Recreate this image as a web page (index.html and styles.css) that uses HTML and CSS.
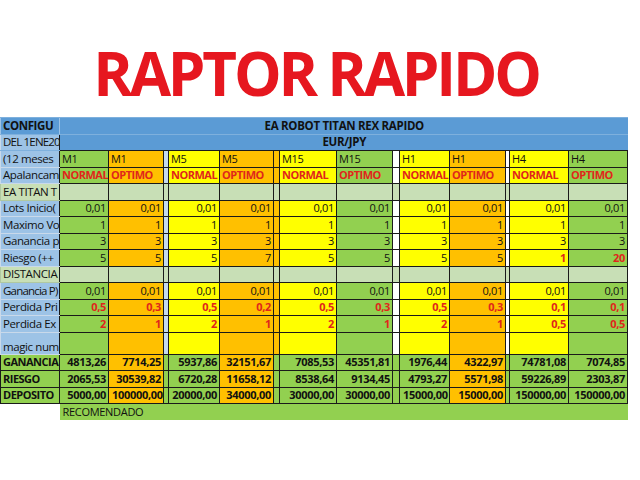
FILE: index.html
```html
<!DOCTYPE html>
<html>
<head>
<meta charset="utf-8">
<link rel="stylesheet" href="styles.css">
</head>
<body>
<div class="title">RAPTOR RAPIDO</div>
<table class="sheet">
<colgroup>
<col class="w-lab"><col class="w49"><col class="w55"><col class="w5"><col class="w51"><col class="w54"><col class="w6"><col class="w57"><col class="w56"><col class="w7"><col class="w50"><col class="w56"><col class="w4"><col class="w59"><col class="w59">
</colgroup>
<tr class="h1"><td class="lab blue b">CONFIGU</td><td class="blue ctr b" colspan="14">EA ROBOT TITAN REX RAPIDO</td></tr>
<tr class="h2"><td class="lab lb tight">DEL 1ENE20</td><td class="blue ctr b" colspan="14">EUR/JPY</td></tr>
<tr class="tf"><td class="lab lb">(12 meses</td><td class="g l">M1</td><td class="o l">M1</td><td class="s1"></td><td class="y l">M5</td><td class="o l">M5</td><td class="s2"></td><td class="y l">M15</td><td class="g l">M15</td><td class="s3"></td><td class="y l">H1</td><td class="o l">H1</td><td class="s4"></td><td class="y l">H4</td><td class="g l">H4</td></tr>
<tr><td class="lab lb">Apalancam</td><td class="g l rt">NORMAL</td><td class="o l rt">OPTIMO</td><td class="s1"></td><td class="y l rt">NORMAL</td><td class="o l rt">OPTIMO</td><td class="s2"></td><td class="y l rt">NORMAL</td><td class="g l rt">OPTIMO</td><td class="s3"></td><td class="y l rt">NORMAL</td><td class="o l rt">OPTIMO</td><td class="s4"></td><td class="y l rt">NORMAL</td><td class="g l rt">OPTIMO</td></tr>
<tr class="pale"><td class="lab">EA TITAN T</td><td></td><td></td><td></td><td></td><td></td><td></td><td></td><td></td><td></td><td></td><td></td><td></td><td></td><td></td></tr>
<tr><td class="lab lb">Lots Inicio(</td><td class="g">0,01</td><td class="o">0,01</td><td class="s1"></td><td class="y">0,01</td><td class="o">0,01</td><td class="s2"></td><td class="y">0,01</td><td class="g">0,01</td><td class="s3"></td><td class="y">0,01</td><td class="o">0,01</td><td class="s4"></td><td class="y">0,01</td><td class="g">0,01</td></tr>
<tr><td class="lab lb">Maximo Vo</td><td class="g">1</td><td class="o">1</td><td class="s1"></td><td class="y">1</td><td class="o">1</td><td class="s2"></td><td class="y">1</td><td class="g">1</td><td class="s3"></td><td class="y">1</td><td class="o">1</td><td class="s4"></td><td class="y">1</td><td class="g">1</td></tr>
<tr><td class="lab lb">Ganancia p</td><td class="g">3</td><td class="o">3</td><td class="s1"></td><td class="y">3</td><td class="o">3</td><td class="s2"></td><td class="y">3</td><td class="g">3</td><td class="s3"></td><td class="y">3</td><td class="o">3</td><td class="s4"></td><td class="y">3</td><td class="g">3</td></tr>
<tr><td class="lab lb">Riesgo (++</td><td class="g">5</td><td class="o">5</td><td class="s1"></td><td class="y">5</td><td class="o">7</td><td class="s2"></td><td class="y">5</td><td class="g">5</td><td class="s3"></td><td class="y">5</td><td class="o">5</td><td class="s4"></td><td class="y rt">1</td><td class="g rt">20</td></tr>
<tr class="pale"><td class="lab">DISTANCIA</td><td></td><td></td><td></td><td></td><td></td><td></td><td></td><td></td><td></td><td></td><td></td><td></td><td></td><td></td></tr>
<tr><td class="lab lb tight">Ganancia P)</td><td class="g">0,01</td><td class="o">0,01</td><td class="s1"></td><td class="y">0,01</td><td class="o">0,01</td><td class="s2"></td><td class="y">0,01</td><td class="g">0,01</td><td class="s3"></td><td class="y">0,01</td><td class="o">0,01</td><td class="s4"></td><td class="y">0,01</td><td class="g">0,01</td></tr>
<tr><td class="lab lb">Perdida Pri</td><td class="g rt">0,5</td><td class="o rt">0,3</td><td class="s1"></td><td class="y rt">0,5</td><td class="o rt">0,2</td><td class="s2"></td><td class="y rt">0,5</td><td class="g rt">0,3</td><td class="s3"></td><td class="y rt">0,5</td><td class="o rt">0,3</td><td class="s4"></td><td class="y rt">0,1</td><td class="g rt">0,1</td></tr>
<tr><td class="lab lb">Perdida Ex</td><td class="g rt">2</td><td class="o rt">1</td><td class="s1"></td><td class="y rt">2</td><td class="o rt">1</td><td class="s2"></td><td class="y rt">2</td><td class="g rt">1</td><td class="s3"></td><td class="y rt">2</td><td class="o rt">1</td><td class="s4"></td><td class="y rt">0,5</td><td class="g rt">0,5</td></tr>
<tr class="magic"><td class="lab lb mg">magic num</td><td class="g"></td><td class="o"></td><td class="s1"></td><td class="y"></td><td class="o"></td><td class="s2"></td><td class="y"></td><td class="g"></td><td class="s3"></td><td class="y"></td><td class="o"></td><td class="s4"></td><td class="y"></td><td class="g"></td></tr>
<tr class="tot"><td class="lab">GANANCIA</td><td>4813,26</td><td class="o">7714,25</td><td></td><td>5937,86</td><td class="o">32151,67</td><td></td><td>7085,53</td><td>45351,81</td><td></td><td>1976,44</td><td class="o">4322,97</td><td></td><td>74781,08</td><td>7074,85</td></tr>
<tr class="tot"><td class="lab">RIESGO</td><td>2065,53</td><td class="o">30539,82</td><td></td><td>6720,28</td><td class="o">11658,12</td><td></td><td>8538,64</td><td>9134,45</td><td></td><td>4793,27</td><td class="o">5571,98</td><td></td><td>59226,89</td><td>2303,87</td></tr>
<tr class="tot"><td class="lab">DEPOSITO</td><td>5000,00</td><td class="o">100000,00</td><td></td><td>20000,00</td><td class="o">34000,00</td><td></td><td>30000,00</td><td>30000,00</td><td></td><td>15000,00</td><td class="o">15000,00</td><td></td><td>150000,00</td><td>150000,00</td></tr>
<tr class="rec"><td class="lab"></td><td class="l" colspan="14">RECOMENDADO</td></tr>
</table>
</body>
</html>
```
FILE: styles.css
```css
html, body {
  margin: 0;
  padding: 0;
  background: #ffffff;
}
body {
  width: 640px;
  height: 480px;
  overflow: hidden;
  font-family: "Open Sans", "DejaVu Sans", sans-serif;
}
.title {
  padding-top: 43px;
  height: 60px;
  line-height: 60px;
  margin-bottom: 14px;
  font-size: 60px;
  font-weight: 700;
  color: #e6171f;
  text-align: center;
  padding-right: 8px;
  letter-spacing: -3.2px;
  white-space: nowrap;
}
.sheet {
  border-collapse: collapse;
  table-layout: fixed;
  width: 627px;
  font-size: 11px;
  letter-spacing: -0.3px;
  color: #111;
}
.w-lab { width: 59px; }
.w49 { width: 49px; }
.w55 { width: 55px; }
.w5 { width: 5px; }
.w51 { width: 51px; }
.w54 { width: 54px; }
.w6 { width: 6px; }
.w57 { width: 57px; }
.w56 { width: 56px; }
.w7 { width: 7px; }
.w50 { width: 50px; }
.w4 { width: 4px; }
.w59 { width: 59px; }
.sheet tr { height: 16.5px; }
.sheet tr.magic { height: 22px; }
.sheet td {
  padding: 0 2px 0 3px;
  border: 1px solid #1a1a1a;
  white-space: nowrap;
  overflow: hidden;
  text-align: right;
  line-height: 14px;
  vertical-align: middle;
}
.sheet td.lab {
  text-align: left;
  padding: 0 0 0 2px;
  font-size: 11.5px;
  letter-spacing: -0.4px;
  border-color: #c9d9ea;
  border-right-color: #1a1a1a;
}
.sheet td.lab.tight { letter-spacing: -0.8px; }
.sheet td.mg { vertical-align: bottom; }
.sheet td.l { text-align: left; padding: 0 0 0 2px; }
.sheet td.l.rt { letter-spacing: -0.5px; }
.sheet td.ctr { text-align: center; font-size: 11.5px; }
.b { font-weight: 700; }
.blue { background: #5b9bd5; }
.sheet tr.h1 td, .sheet tr.h2 td {
  border-top-color: #7eb0dd;
  border-bottom-color: #7eb0dd;
}
.sheet tr.h1 td.blue, .sheet tr.h2 td.blue {
  border-left-color: #9dc3e6;
  border-right: none;
}
.sheet tr.h2 td.blue { border-bottom-color: #1a1a1a; }
.lb { background: #9dc3e6; }
.g { background: #92d050; }
.o { background: #ffc000; }
.y { background: #ffff00; }
.s1 { background: #c5d9ee; }
.s2 { background: #ffc000; }
.s3, .s4 { background: #ffffff; }
.sheet td.s1, .sheet td.s2, .sheet td.s3, .sheet td.s4 { padding: 0; }
.rt {
  color: #e0261b;
  font-weight: 700;
}
.sheet tr.pale td { background: #c8dfb6; }
.sheet tr.pale td.lab { border-color: #b0c8a0; border-right-color: #1a1a1a; }
.sheet tr.tot td {
  background: #92d050;
  font-weight: 700;
}
.sheet tr.tot td.o { background: #ffc000; }
.sheet tr.tot td.lab { border-color: #1a1a1a; font-size: 11px; letter-spacing: -0.5px; }
.sheet tr.rec td {
  background: #92d050;
  border: none;
  padding-left: 3px;
}
.sheet tr.rec td.lab { background: #ffffff; }
```
